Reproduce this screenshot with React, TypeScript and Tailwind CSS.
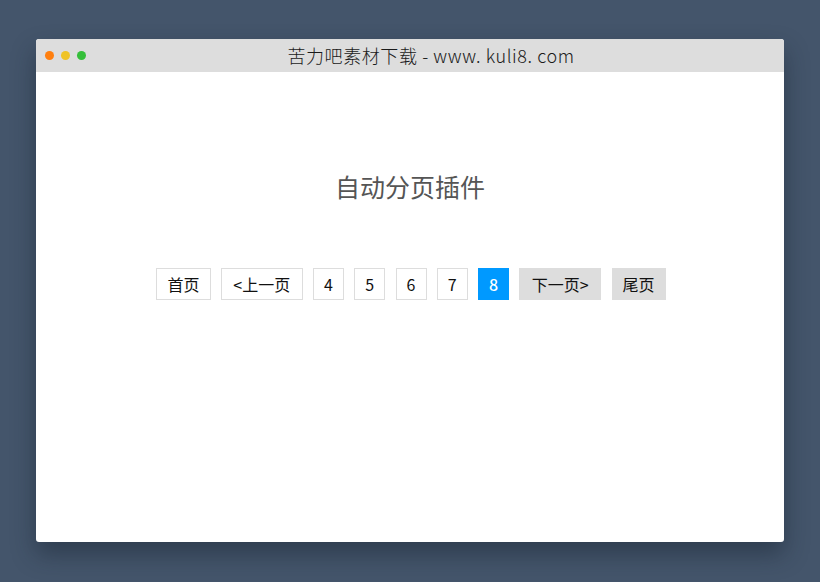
import React from 'react';

const pages = ['4', '5', '6', '7'];

export default function App() {
  const font = { fontFamily: '"Noto Sans CJK SC", "Noto Sans", sans-serif' };
  const btn = 'h-8 flex items-center justify-center px-[10px] border border-[#dddddd] bg-white text-[16px] text-[#111] leading-none';

  return (
    <div className="w-[820px] h-[582px] bg-[#44556b] pt-[39px] px-[36px]" style={font}>
      <div className="w-[748px] h-[503px] bg-white rounded-[3px] shadow-[0_12px_24px_rgba(20,30,45,0.45)] flex flex-col overflow-hidden">
        {/* Title bar */}
        <div className="relative h-[33px] bg-[#dddddd] flex items-center justify-center">
          <div className="absolute left-[9px] top-[12px] flex gap-[7px]">
            <span className="w-[9px] h-[9px] rounded-full bg-[#ff7f0f]" />
            <span className="w-[9px] h-[9px] rounded-full bg-[#efc326]" />
            <span className="w-[9px] h-[9px] rounded-full bg-[#35bf3a]" />
          </div>
          <span className="ml-[42px] text-[18px] font-light text-[#1a1a1a] tracking-[0.6px]">苦力吧素材下载 - www. kuli8. com</span>
        </div>

        {/* Body */}
        <div className="flex flex-col items-center">
          <h1 className="mt-[98px] text-[25px] text-[#555] leading-[32px]">自动分页插件</h1>
          <div className="mt-[66px] ml-[2px] flex gap-[10.25px]">
            <a className={btn}>首页</a>
            <a className={`${btn} w-[82px]`}>&lt;上一页</a>
            {pages.map(p => (
              <a key={p} className={`${btn} w-[31px]`}>{p}</a>
            ))}
            <a className="h-8 w-[31px] flex items-center justify-center border border-[#0099ff] bg-[#0099ff] text-[16px] text-white font-medium leading-none">8</a>
            <a className="h-8 w-[82px] flex items-center justify-center border border-[#dddddd] bg-[#dddddd] text-[16px] text-[#111] leading-none">下一页&gt;</a>
            <a className="h-8 flex items-center justify-center px-[10px] border border-[#dddddd] bg-[#dddddd] text-[16px] text-[#111] leading-none">尾页</a>
          </div>
        </div>
      </div>
    </div>
  );
}
